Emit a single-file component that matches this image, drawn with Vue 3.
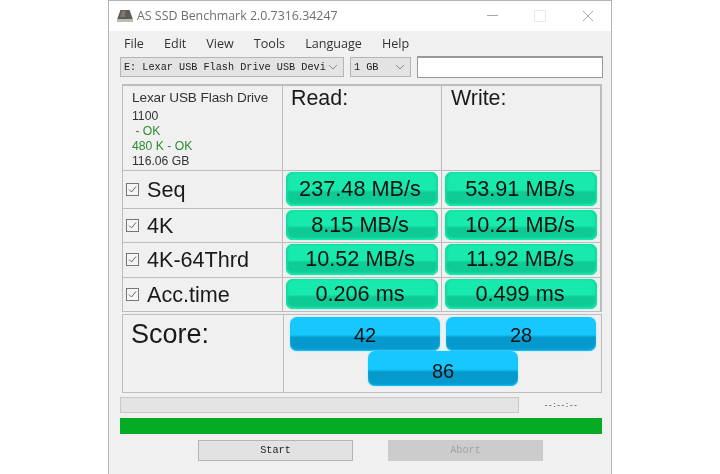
<script setup>
const menus = ['File', 'Edit', 'View', 'Tools', 'Language', 'Help']
const rows = [
  { name: 'Seq', read: '237.48 MB/s', write: '53.91 MB/s', cls: 'r1' },
  { name: '4K', read: '8.15 MB/s', write: '10.21 MB/s', cls: 'r2' },
  { name: '4K-64Thrd', read: '10.52 MB/s', write: '11.92 MB/s', cls: 'r3' },
  { name: 'Acc.time', read: '0.206 ms', write: '0.499 ms', cls: 'r4' }
]
</script>

<template>
  <div class="page">
    <div class="window">
      <header class="titlebar">
        <svg class="appicon" width="16" height="12" viewBox="0 0 16 12">
          <path d="M3.5 0h9L16 9.5H0z" fill="#5f5b57" />
          <path d="M0 9h16v3H0z" fill="#bdbab6" />
          <path d="M5 1h3.5L8 7H3z" fill="#7d7873" />
        </svg>
        <span class="title">AS SSD Benchmark 2.0.7316.34247</span>
        <div class="winbtns">
          <span class="min"></span>
          <span class="max"></span>
          <svg width="12" height="12" viewBox="0 0 12 12"><path d="M1 1l10 10M11 1L1 11" stroke="#a8a8a8" stroke-width="1" fill="none" /></svg>
        </div>
      </header>

      <div class="body">
        <nav class="menu">
          <span v-for="m in menus" :key="m">{{ m }}</span>
        </nav>

        <div class="tools">
          <div class="combo drive">
            <span>E: Lexar USB Flash Drive USB Devi</span>
            <svg width="10" height="6" viewBox="0 0 10 6"><path d="M1 1l4 4 4-4" stroke="#8c8c8c" fill="none" /></svg>
          </div>
          <div class="combo size">
            <span>1 GB</span>
            <svg width="10" height="6" viewBox="0 0 10 6"><path d="M1 1l4 4 4-4" stroke="#8c8c8c" fill="none" /></svg>
          </div>
          <div class="field"></div>
        </div>

        <section class="results">
          <div class="cell info">
            <div class="drive-name">Lexar USB Flash Drive</div>
            <div>1100</div>
            <div class="ok">&nbsp;- OK</div>
            <div class="ok">480 K - OK</div>
            <div>116.06 GB</div>
          </div>
          <div class="cell head">Read:</div>
          <div class="cell head">Write:</div>

          <template v-for="r in rows" :key="r.name">
            <div class="cell label" :class="r.cls">
              <span class="check">
                <svg width="11" height="11" viewBox="0 0 11 11"><path d="M2 5.5l2.5 2.5L9 2.5" stroke="#666" stroke-width="1" fill="none" /></svg>
              </span>
              {{ r.name }}
            </div>
            <div class="cell val read" :class="r.cls"><div class="pill green">{{ r.read }}</div></div>
            <div class="cell val write" :class="r.cls"><div class="pill green">{{ r.write }}</div></div>
          </template>
        </section>

        <section class="scores">
          <div class="cell score-label">Score:</div>
          <div class="cell score-vals">
            <div class="pill blue">42</div>
            <div class="pill blue">28</div>
            <div class="pill blue total">86</div>
          </div>
        </section>

        <div class="progress-row">
          <div class="progress"></div>
          <span class="time">--:--:--</span>
        </div>
        <div class="greenbar"></div>

        <div class="actions">
          <div class="btn">Start</div>
          <div class="btn disabled">Abort</div>
        </div>
      </div>
    </div>
  </div>
</template>

<style>
html, body { margin: 0; background: #fff; }
</style>

<style scoped>
.page {
  width: 720px;
  height: 474px;
  overflow: hidden;
  background: #fff;
  font-family: "Liberation Sans", Arial, sans-serif;
  color: #1a1a1a;
}
.window {
  margin-left: 108px;
  width: 504px;
  height: 474px;
  box-sizing: border-box;
  border: 1px solid #b4b4b4;
  border-bottom: 0;
  display: flex;
  flex-direction: column;
  filter: blur(0.5px);
}
.titlebar {
  height: 30px;
  flex: none;
  display: flex;
  align-items: center;
  padding-left: 8px;
  background: #fff;
}
.appicon { margin-right: 4px; margin-top: -1px; }
.title {
  font-family: "Open Sans", "Noto Sans", sans-serif;
  font-size: 12.4px;
  color: #6e6e6e;
  margin-top: -1px;
}
.winbtns {
  margin-left: auto;
  display: flex;
  align-items: center;
  gap: 36px;
  padding-right: 17px;
  margin-top: -1px;
}
.min { width: 11px; height: 1px; background: #a8a8a8; }
.max { width: 10px; height: 10px; border: 1px solid #ececec; }
.body {
  flex: 1;
  background: #f0f0f0;
  display: flex;
  flex-direction: column;
  padding-left: 11px;
  width: 491px;
}
.menu {
  height: 25px;
  display: flex;
  align-items: center;
  gap: 20px;
  padding-left: 4px;
  font-family: "Open Sans", "Noto Sans", sans-serif;
  font-size: 12.6px;
  color: #333;
  flex: none;
}
.tools {
  height: 22px;
  display: flex;
  align-items: center;
  flex: none;
  gap: 5px;
}
.combo {
  box-sizing: border-box;
  height: 20px;
  background: #e3e3e3;
  border: 1px solid #b5b5b5;
  display: flex;
  align-items: center;
  justify-content: space-between;
  padding: 0 5px 0 3px;
  font-family: "Liberation Mono", monospace;
  font-size: 10.2px;
  color: #1c1c1c;
  white-space: pre;
}
.drive { width: 224px; }
.size { width: 61px; margin-left: 1px; }
.field {
  box-sizing: border-box;
  width: 186px;
  height: 22px;
  background: #fff;
  border: 1px solid #999;
  border-width: 2px 1px 1px 1px;
  margin-left: 1px;
}
.results {
  margin-top: 6px;
  margin-left: 2px;
  display: grid;
  grid-template-columns: 160px 159px 161px;
  grid-template-rows: 86px 38px 34px 35px 35px;
  width: 480px;
  flex: none;
}
.cell {
  box-sizing: border-box;
  border: 1px solid #bdbdbd;
  border-right-width: 0;
  border-bottom-width: 0;
}
.info {
  padding: 3px 0 0 9px;
  font-size: 12.2px;
  line-height: 15px;
  color: #333;
  border-top-width: 2px;
}
.drive-name { font-size: 13.6px; line-height: 17px; margin-bottom: 3px; letter-spacing: -0.1px; }
.ok { color: #2f8a2f; }
.head {
  font-size: 21.4px;
  line-height: 24px;
  padding: 0 0 0 8px;
  border-top-width: 2px;
}
.head:nth-child(3) { border-right-width: 2px; padding-left: 9px; }
.label {
  display: flex;
  align-items: center;
  gap: 8px;
  font-size: 21.6px;
  padding-left: 3px;
}
.check {
  box-sizing: border-box;
  width: 13px;
  height: 13px;
  flex: none;
  background: #f5f5f5;
  border: 1px solid #777;
  display: flex;
  align-items: center;
  justify-content: center;
  margin-top: -1px;
}
.val { padding: 1px 3px 2px; }
.write { border-right-width: 2px; }
.r4 { border-bottom-width: 1px; }
.pill {
  box-sizing: border-box;
  border-radius: 7px;
  display: flex;
  align-items: center;
  justify-content: center;
  color: #111;
}
.green {
  height: 100%;
  font-size: 21.7px;
  padding-bottom: 1px;
  background: linear-gradient(to bottom, #18e9ad 0, #18e9ad 52%, #0ecb95 60%, #0ecb95 100%);
  box-shadow: 0 0 2px #a5f3dc, inset 0 -2px 2px #18e9ad, inset 2px 0 2px #12d9a0, inset -2px 0 2px #12d9a0;
}
.read .green { padding-right: 4px; }
.write .green { padding-right: 2px; }
.scores {
  margin-top: 2px;
  margin-left: 2px;
  display: grid;
  grid-template-columns: 161px 319px;
  height: 79px;
  width: 480px;
  flex: none;
}
.scores .cell { border-width: 1px; }
.scores .score-label { border-right-width: 0; }
.score-label {
  font-size: 27px;
  line-height: 32px;
  padding: 3px 0 0 8px;
}
.score-vals {
  display: grid;
  grid-template-columns: 150px 150px;
  grid-template-rows: 34px 35px;
  column-gap: 6px;
  padding: 2px 0 0 6px;
}
.blue {
  font-size: 20px;
  padding-top: 2px;
  background: linear-gradient(to bottom, #16c8fd 0, #16c8fd 52%, #0699cd 60%, #0699cd 100%);
  box-shadow: 0 0 2px #8fe3ff, inset 0 -1px 2px #16c8fd;
}
.total {
  grid-column: 1 / span 2;
  width: 150px;
  justify-self: center;
  padding-top: 5px;
}
.progress-row {
  margin-top: 3px;
  height: 17px;
  display: flex;
  align-items: center;
  flex: none;
}
.progress {
  box-sizing: border-box;
  width: 399px;
  height: 16px;
  background: #e4e4e4;
  border: 1px solid #c8c8c8;
}
.time {
  margin-left: 25px;
  font-family: "Liberation Mono", monospace;
  font-size: 7px;
  font-weight: 700;
  color: #666;
}
.greenbar {
  margin-top: 5px;
  width: 482px;
  height: 16px;
  flex: none;
  background: #06ab24;
}
.actions {
  margin-top: 6px;
  margin-left: 78px;
  display: flex;
  gap: 35px;
  flex: none;
}
.btn {
  box-sizing: border-box;
  width: 155px;
  height: 21px;
  background: #e2e2e2;
  border: 1px solid #b5b5b5;
  display: flex;
  align-items: center;
  justify-content: center;
  font-family: "Liberation Mono", monospace;
  font-size: 10.2px;
  color: #1c1c1c;
}
.disabled {
  background: #cccccc;
  border-color: #cccccc;
  color: #a2a2a2;
}
</style>
